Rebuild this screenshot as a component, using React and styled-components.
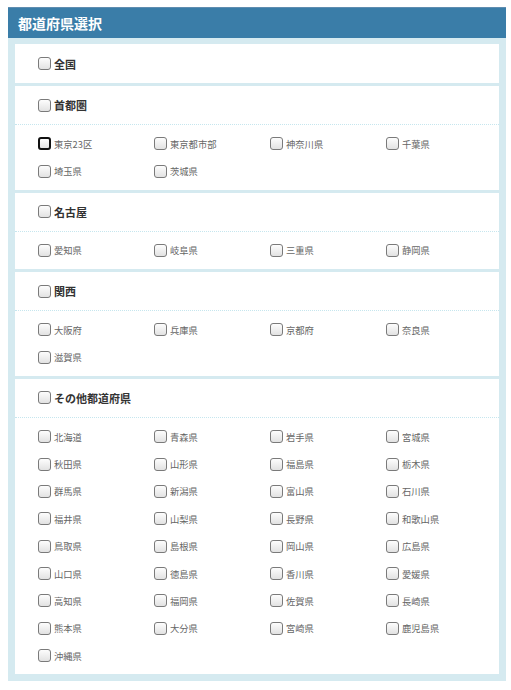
import React from 'react';
import styled, { createGlobalStyle } from 'styled-components';

const groups = [
	{ title: '全国', items: [] },
	{ title: '首都圏', items: ['東京23区', '東京都市部', '神奈川県', '千葉県', '埼玉県', '茨城県'] },
	{ title: '名古屋', items: ['愛知県', '岐阜県', '三重県', '静岡県'] },
	{ title: '関西', items: ['大阪府', '兵庫県', '京都府', '奈良県', '滋賀県'] },
	{
		title: 'その他都道府県',
		items: [
			'北海道', '青森県', '岩手県', '宮城県',
			'秋田県', '山形県', '福島県', '栃木県',
			'群馬県', '新潟県', '富山県', '石川県',
			'福井県', '山梨県', '長野県', '和歌山県',
			'鳥取県', '島根県', '岡山県', '広島県',
			'山口県', '徳島県', '香川県', '愛媛県',
			'高知県', '福岡県', '佐賀県', '長崎県',
			'熊本県', '大分県', '宮崎県', '鹿児島県',
			'沖縄県',
		],
	},
];

export default function App() {
	return (
		<>
			<GlobalStyle />
			<Wrapper>
				<Header>都道府県選択</Header>
				<Body>
					{groups.map((g) => (
						<Panel key={g.title}>
							<PanelHead hasItems={g.items.length > 0}>
								<Label>
									<Check type="checkbox" />
									<Title>{g.title}</Title>
								</Label>
							</PanelHead>
							{g.items.length > 0 && (
								<Grid>
									{g.items.map((name, i) => (
										<Label key={name}>
											<Check type="checkbox" focused={g.title === '首都圏' && i === 0} />
											<Item>{name}</Item>
										</Label>
									))}
								</Grid>
							)}
						</Panel>
					))}
				</Body>
			</Wrapper>
		</>
	);
}

const GlobalStyle = createGlobalStyle`
	body {
		margin: 0;
		padding: 7px 5px 0 8px;
		background: #fff;
		font-family: "Noto Sans CJK JP", "Noto Sans", sans-serif;
	}
`;

const Wrapper = styled.div`
	width: 498px;
`;

const Header = styled.div`
	height: 30px;
	border-top: 1px solid #5f8db0;
	background: #3a7da8;
	color: #fff;
	font-size: 14px;
	font-weight: bold;
	line-height: 30px;
	padding-left: 10px;
`;

const Body = styled.div`
	background: #d5eaf0;
	padding: 6px 7px 7px;
	display: flex;
	flex-direction: column;
	gap: 3px;
`;

const Panel = styled.div`
	background: #fff;
`;

const PanelHead = styled.div`
	height: ${(p) => (p.hasItems ? '38px' : '39px')};
	display: flex;
	align-items: center;
	padding-left: 23px;
	border-bottom: ${(p) => (p.hasItems ? '1px dotted #c6e6ee' : 'none')};
`;

const Grid = styled.div`
	display: grid;
	grid-template-columns: repeat(4, 116px);
	grid-auto-rows: 27.4px;
	padding: 5px 0 5px 23px;
`;

const Label = styled.label`
	display: flex;
	align-items: center;
	gap: 3px;
`;

const Check = styled.input`
	appearance: none;
	margin: 0;
	width: 13px;
	height: 13px;
	box-sizing: border-box;
	border: ${(p) => (p.focused ? '2px solid #111' : '1px solid #7a7a7a')};
	border-radius: 3px;
	background: linear-gradient(#fdfdfd, #e2e2e2);
`;

const Title = styled.span`
	font-size: 11px;
	font-weight: bold;
	color: #333;
`;

const Item = styled.span`
	font-size: 9.3px;
	color: #666;
`;
